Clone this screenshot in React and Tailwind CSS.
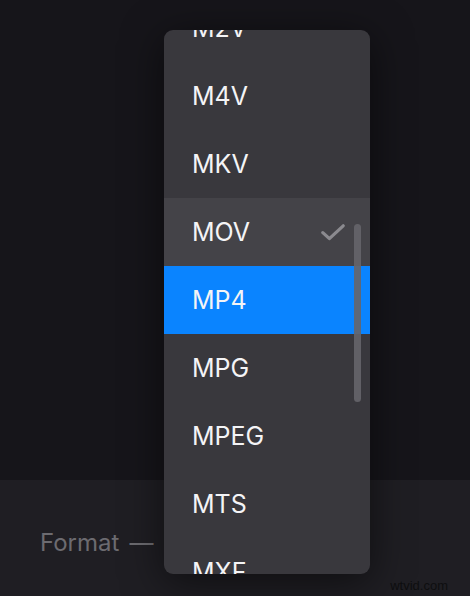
export default function App() {
  const formats = ["M2V", "M4V", "MKV", "MOV", "MP4", "MPG", "MPEG", "MTS", "MXF"];
  const current = "MOV";
  const hovered = "MP4";

  return (
    <div
      className="relative w-[470px] h-[596px] overflow-hidden flex flex-col bg-[#16151a]"
      style={{ fontFamily: "Inter, 'Noto Sans', sans-serif" }}
    >
      {/* preview area */}
      <div className="h-[480px] shrink-0 bg-[#16151a]" />

      {/* settings panel */}
      <div className="flex-1 min-h-0 bg-[#1f1e23]">
        <div className="flex items-center h-[126px] pl-[40px] text-[24px] text-[#6c6b70]">
          <span>Format</span>
          <span className="ml-[10px]">—</span>
        </div>
      </div>

      {/* watermark */}
      <div
        className="absolute right-[22px] bottom-[1px] text-[13px] text-[#0e0e10]"
        style={{ fontFamily: "'Liberation Sans', sans-serif" }}
      >
        wtvid.com
      </div>

      {/* format dropdown */}
      <div className="absolute left-[164px] top-[30px] w-[206px] h-[544px] rounded-[9px] overflow-hidden bg-[#39383d] shadow-[0_8px_40px_rgba(0,0,0,0.55)]">
        <div className="-mt-[36px] flex flex-col">
          {formats.map((f) => (
            <div
              key={f}
              className={
                "h-[68px] shrink-0 flex items-center justify-between pl-[28px] pr-[25px] text-[25px] text-[#f4f4f6] " +
                (f === hovered ? "bg-[#0a84ff]" : f === current ? "bg-[#444348]" : "")
              }
            >
              <span className="pt-[1px]">{f}</span>
              {f === current && (
                <svg width="24" height="17" viewBox="0 0 24 17" fill="none">
                  <path
                    d="M1.8 8.6 L8.4 14.6 L22.2 1.8"
                    stroke="#8b8a8f"
                    strokeWidth="3.2"
                    strokeLinecap="round"
                    strokeLinejoin="round"
                  />
                </svg>
              )}
            </div>
          ))}
        </div>
        <div className="absolute left-[190px] top-[194px] w-[7px] h-[178px] rounded-full bg-[#66656a]/90" />
      </div>
    </div>
  );
}
